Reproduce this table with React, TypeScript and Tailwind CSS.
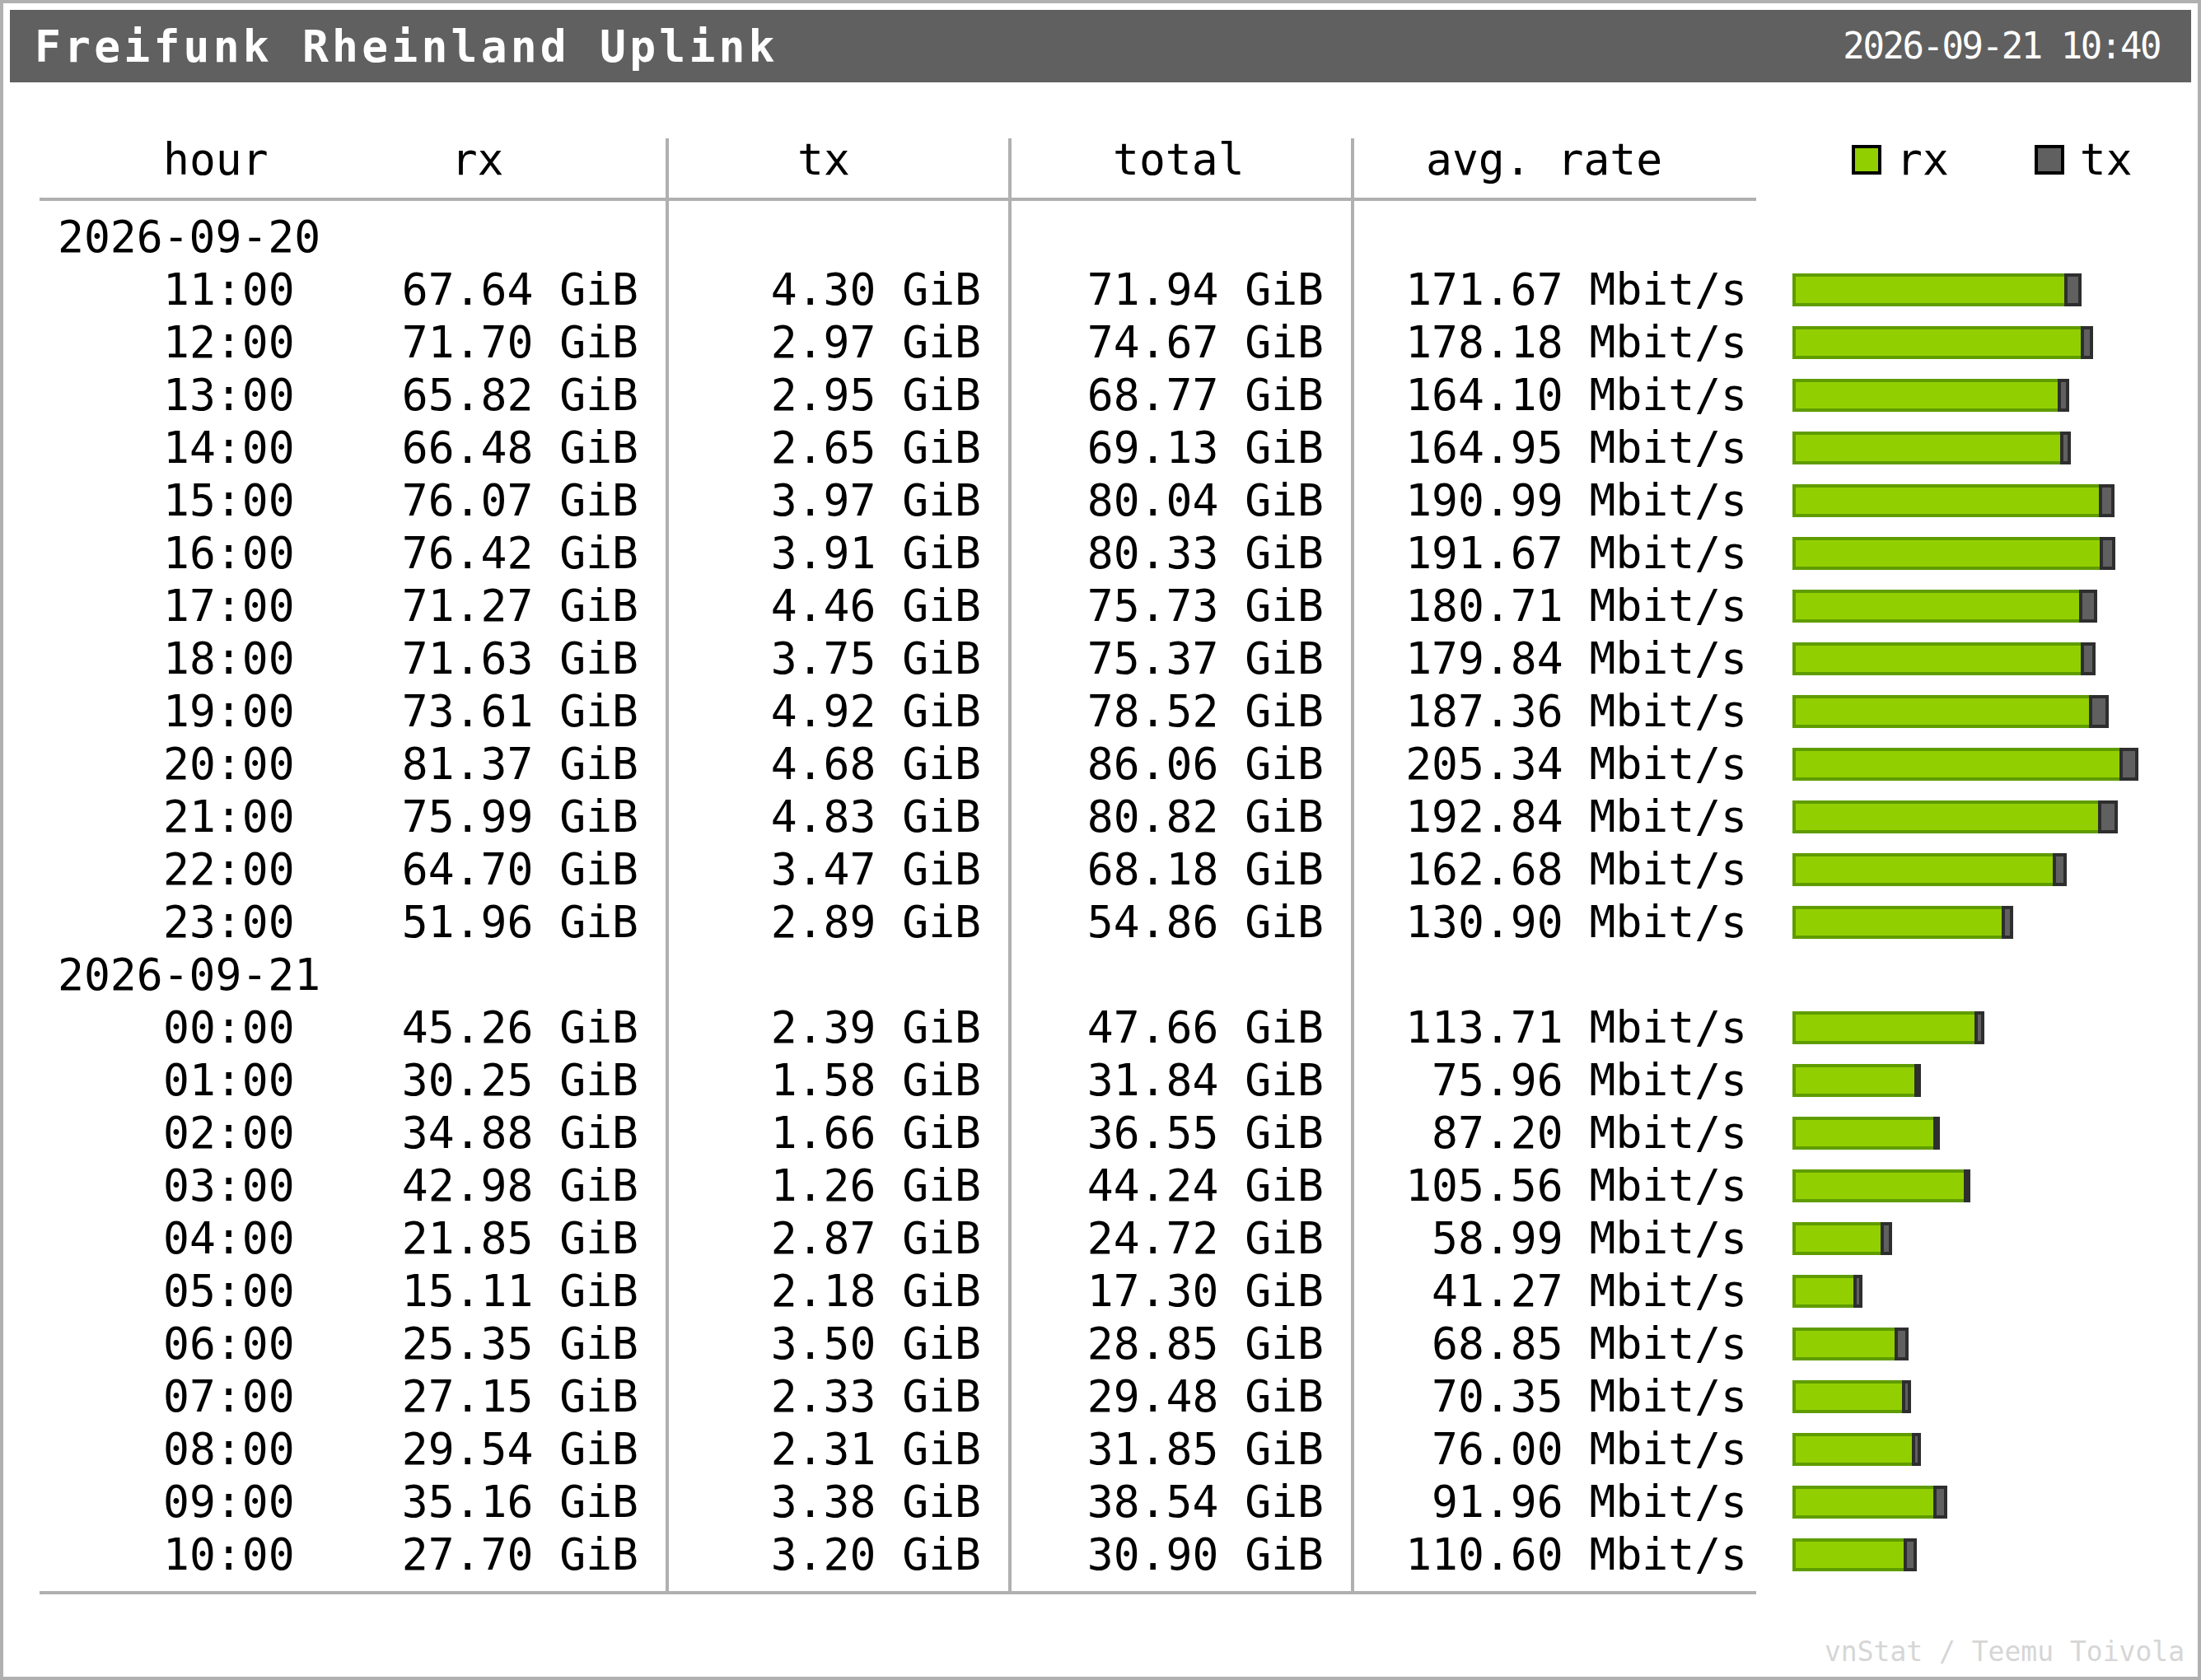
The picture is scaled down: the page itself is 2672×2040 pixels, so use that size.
import React from "react";

type Hour = { h: string; rx: string; tx: string; total: string; rate: string };
type Row = { date: string } | Hour;

const rows: Row[] = [
  { date: "2026-09-20" },
  { h: "11:00", rx: "67.64", tx: "4.30", total: "71.94", rate: "171.67" },
  { h: "12:00", rx: "71.70", tx: "2.97", total: "74.67", rate: "178.18" },
  { h: "13:00", rx: "65.82", tx: "2.95", total: "68.77", rate: "164.10" },
  { h: "14:00", rx: "66.48", tx: "2.65", total: "69.13", rate: "164.95" },
  { h: "15:00", rx: "76.07", tx: "3.97", total: "80.04", rate: "190.99" },
  { h: "16:00", rx: "76.42", tx: "3.91", total: "80.33", rate: "191.67" },
  { h: "17:00", rx: "71.27", tx: "4.46", total: "75.73", rate: "180.71" },
  { h: "18:00", rx: "71.63", tx: "3.75", total: "75.37", rate: "179.84" },
  { h: "19:00", rx: "73.61", tx: "4.92", total: "78.52", rate: "187.36" },
  { h: "20:00", rx: "81.37", tx: "4.68", total: "86.06", rate: "205.34" },
  { h: "21:00", rx: "75.99", tx: "4.83", total: "80.82", rate: "192.84" },
  { h: "22:00", rx: "64.70", tx: "3.47", total: "68.18", rate: "162.68" },
  { h: "23:00", rx: "51.96", tx: "2.89", total: "54.86", rate: "130.90" },
  { date: "2026-09-21" },
  { h: "00:00", rx: "45.26", tx: "2.39", total: "47.66", rate: "113.71" },
  { h: "01:00", rx: "30.25", tx: "1.58", total: "31.84", rate: "75.96" },
  { h: "02:00", rx: "34.88", tx: "1.66", total: "36.55", rate: "87.20" },
  { h: "03:00", rx: "42.98", tx: "1.26", total: "44.24", rate: "105.56" },
  { h: "04:00", rx: "21.85", tx: "2.87", total: "24.72", rate: "58.99" },
  { h: "05:00", rx: "15.11", tx: "2.18", total: "17.30", rate: "41.27" },
  { h: "06:00", rx: "25.35", tx: "3.50", total: "28.85", rate: "68.85" },
  { h: "07:00", rx: "27.15", tx: "2.33", total: "29.48", rate: "70.35" },
  { h: "08:00", rx: "29.54", tx: "2.31", total: "31.85", rate: "76.00" },
  { h: "09:00", rx: "35.16", tx: "3.38", total: "38.54", rate: "91.96" },
  { h: "10:00", rx: "27.70", tx: "3.20", total: "30.90", rate: "110.60" },
];

const isHour = (r: Row): r is Hour => "h" in r;

// px per GiB for the bar graph
const SCALE = 4.885;

function Bar({ r }: { r: Hour }) {
  const total = Math.round(parseFloat(r.total) * SCALE);
  const tx = Math.max(Math.round(parseFloat(r.tx) * SCALE), 8);
  return (
    <div className="flex h-10">
      <div
        className="h-full bg-[#92cf00] border-4 border-r-0 border-[#5f9c00]"
        style={{ width: total - tx }}
      />
      <div className="h-full bg-[#606060] border-4 border-[#2e2e2e]" style={{ width: tx }} />
    </div>
  );
}

export default function App() {
  return (
    <div className="w-[2672px] h-[2040px] overflow-hidden border-4 border-[#b0b0b0] bg-white p-2 font-['DejaVu_Sans_Mono',monospace] text-black">
      <div className="h-[88px] bg-[#606060] flex items-center justify-between pl-[30px] pr-[38px] text-white">
        <span className="text-[53px] font-bold tracking-[4.2px] leading-none">Freifunk Rheinland Uplink</span>
        <span className="text-[44px] tracking-[-2.45px] leading-none">2026-09-21 10:40</span>
      </div>

      <div className="mt-[68px] flex pl-[36px] text-[53px]">
        {/* hour + rx */}
        <div className="w-[760px] flex flex-col">
          <div className="h-[76px] border-b-4 border-[#b0b0b0] leading-[52px] flex">
            <span className="ml-[150px]">hour</span>
            <span className="ml-[222px]">rx</span>
          </div>
          <div className="border-b-4 border-[#b0b0b0] py-3">
            {rows.map((r, i) =>
              isHour(r) ? (
                <div key={i} className="h-16 leading-[64px] flex justify-between pl-[150px] pr-[33px]">
                  <span>{r.h}</span>
                  <span>{r.rx} GiB</span>
                </div>
              ) : (
                <div key={i} className="h-16 leading-[64px] pl-[22px]">
                  {r.date}
                </div>
              )
            )}
          </div>
        </div>

        {/* tx */}
        <div className="w-[416px] border-l-4 border-[#b0b0b0] flex flex-col">
          <div className="h-[76px] border-b-4 border-[#b0b0b0] leading-[52px] pl-[156px]">tx</div>
          <div className="border-b-4 border-[#b0b0b0] py-3">
            {rows.map((r, i) => (
              <div key={i} className="h-16 leading-[64px] text-right pr-[33px]">
                {isHour(r) ? `${r.tx} GiB` : ""}
              </div>
            ))}
          </div>
        </div>

        {/* total */}
        <div className="w-[416px] border-l-4 border-[#b0b0b0] flex flex-col">
          <div className="h-[76px] border-b-4 border-[#b0b0b0] leading-[52px] pl-[123px]">total</div>
          <div className="border-b-4 border-[#b0b0b0] py-3">
            {rows.map((r, i) => (
              <div key={i} className="h-16 leading-[64px] text-right pr-[33px]">
                {isHour(r) ? `${r.total} GiB` : ""}
              </div>
            ))}
          </div>
        </div>

        {/* avg. rate */}
        <div className="w-[492px] border-l-4 border-[#b0b0b0] flex flex-col">
          <div className="h-[76px] border-b-4 border-[#b0b0b0] leading-[52px] pl-[87px] whitespace-pre">avg. rate</div>
          <div className="border-b-4 border-[#b0b0b0] py-3">
            {rows.map((r, i) => (
              <div key={i} className="h-16 leading-[64px] text-right pr-[11px]">
                {isHour(r) ? `${r.rate} Mbit/s` : ""}
              </div>
            ))}
          </div>
        </div>

        {/* bars */}
        <div className="flex-1 flex flex-col">
          <div className="h-[76px] leading-[52px] flex items-start pl-[116px]">
            <span className="mt-2 w-9 h-9 border-4 border-black bg-[#92cf00]" />
            <span className="ml-[18px]">rx</span>
            <span className="ml-[104px] mt-2 w-9 h-9 border-4 border-black bg-[#606060]" />
            <span className="ml-[19px]">tx</span>
          </div>
          <div className="py-3 pl-[44px]">
            {rows.map((r, i) => (
              <div key={i} className="h-16 flex items-center">
                {isHour(r) && <Bar r={r} />}
              </div>
            ))}
          </div>
        </div>
      </div>

      <div className="mt-[50px] text-right pr-[8px] text-[33px] leading-[40px] text-[#d6d6d6]">
        vnStat / Teemu Toivola
      </div>
    </div>
  );
}
